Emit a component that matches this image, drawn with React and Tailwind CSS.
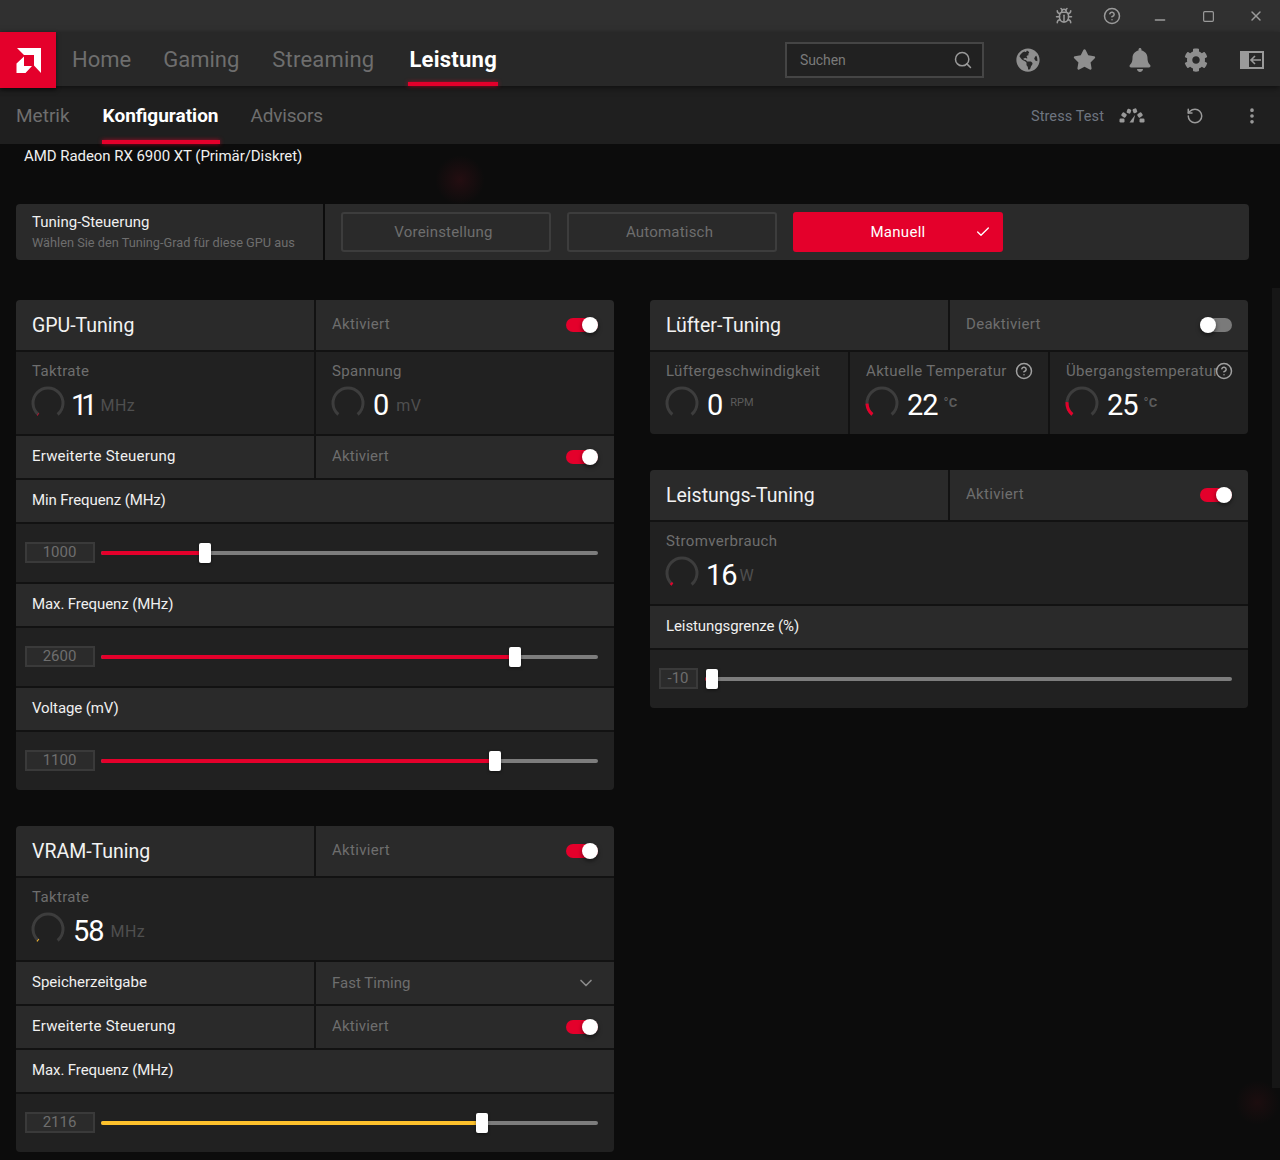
import React from "react";
import { Bug, CircleHelp, Minus, Square, X, Search, RotateCcw, EllipsisVertical, ChevronDown, Check } from "lucide-react";
import { FaGlobeAmericas, FaStar, FaBell, FaCog } from "react-icons/fa";

const RED = "#e4002b";

function Toggle({ on = true }) {
  return (
    <div className={`relative w-[32px] h-[14px] rounded-full ${on ? "bg-[#e4002b]" : "bg-[#7a7a7a]"}`}>
      <div className={`absolute top-[-1px] w-[16px] h-[16px] rounded-full bg-white shadow-[0_2px_4px_rgba(0,0,0,0.5)] ${on ? "right-0" : "left-0"}`} />
    </div>
  );
}

function Gauge({ pct = 0, color = RED }) {
  const d = "M7.36 28.5 A15 15 0 1 1 26.64 28.5";
  return (
    <svg width="34" height="34" viewBox="0 0 34 34" className="shrink-0 ml-[-1px]">
      <path d={d} fill="none" stroke="#3d3d3d" strokeWidth="3" />
      {pct > 0 && <path d={d} fill="none" stroke={color} strokeWidth="3" pathLength="100" strokeDasharray={`${pct} 100`} />}
    </svg>
  );
}

function Metric({ label, value, unit, pct, color, small, unitClass = "text-[13px] font-bold", help, className = "", gap = "ml-[7px]", valueClass = "tracking-[-1px] ml-[8px]" }) {
  return (
    <div className={`relative bg-[#212121] h-[82px] pl-[16px] pt-[9px] overflow-hidden ${className}`}>
      <div className="text-[15px] leading-[20px] text-[#6e6e6e] tracking-[0.35px] whitespace-nowrap">{label}</div>
      {help && <CircleHelp size={18} strokeWidth={2} className="absolute right-[15px] top-[10px] text-[#a0a0a0]" />}
      <div className="flex items-center mt-[5px] h-[34px]">
        <Gauge pct={pct} color={color} />
        <div className={`text-[29px] leading-[34px] text-white mt-[3px] ${valueClass}`}>{value}</div>
        {small ? (
          <div className={`self-start leading-[12px] text-[#5c5c5c] mt-[11px] ${unitClass} ${gap}`}>{unit}</div>
        ) : (
          <div className={`text-[16px] leading-[20px] text-[#4f4f4f] tracking-[0.4px] mt-[6px] ${gap}`}>{unit}</div>
        )}
      </div>
    </div>
  );
}

function HeadRow({ title, status, on = true }) {
  return (
    <div className="flex gap-[2px] h-[50px]">
      <div className="w-[298px] bg-[#2a2a2a] flex items-center pl-[16px] text-[19.5px] text-[#f2f2f2] pt-[1px]">{title}</div>
      <div className="w-[298px] bg-[#2a2a2a] flex items-center justify-between pl-[16px] pr-[16px] pb-[1px]">
        <span className="text-[15px] text-[#6e6e6e] tracking-[0.3px] pb-[1px]">{status}</span>
        <Toggle on={on} />
      </div>
    </div>
  );
}

function SplitRow({ title, children, titleClass = "" }) {
  return (
    <div className="flex gap-[2px] h-[42px]">
      <div className={`w-[298px] bg-[#2a2a2a] flex items-center pl-[16px] text-[15px] text-[#f0f0f0] pb-[1px] ${titleClass}`}>{title}</div>
      <div className="w-[298px] bg-[#2a2a2a] flex items-center justify-between pl-[16px] pr-[16px] text-[15px] text-[#6e6e6e] tracking-[0.2px]">{children}</div>
    </div>
  );
}

function LabelRow({ title }) {
  return <div className="h-[42px] bg-[#2a2a2a] flex items-center pl-[16px] text-[15px] text-[#f0f0f0] tracking-[-0.1px] pb-[1px]">{title}</div>;
}

function SliderRow({ value, pos, color = RED, width = 497, boxW = 70, left = 9, right = 16, gap = 6 }) {
  return (
    <div className="bg-[#212121] flex items-start h-[58px]" style={{ paddingLeft: left, paddingRight: right }}>
      <div
        className="mt-[18px] h-[21px] border-2 border-[#3a3a3a] bg-[#2b2b2b] flex items-center justify-center text-[15px] text-[#6e6e6e] shrink-0 pr-[1px]"
        style={{ width: boxW }}
      >
        {value}
      </div>
      <div className="relative h-[4px] mt-[27px] bg-[#7d7d7d] rounded-full" style={{ width, marginLeft: gap }}>
        <div className="absolute left-0 top-0 h-full rounded-full" style={{ width: pos, background: color }} />
        <div className="absolute top-[-8px] w-[12px] h-[20px] bg-white rounded-[2px] shadow-[0_1px_3px_rgba(0,0,0,0.5)]" style={{ left: pos - 6 }} />
      </div>
    </div>
  );
}

function Card({ children, className = "" }) {
  return <div className={`rounded-[4px] overflow-hidden flex flex-col gap-[2px] bg-[#121212] ${className}`}>{children}</div>;
}

function StressIcon() {
  return (
    <svg width="26" height="16" viewBox="0 0 26 16" fill="#9a9a9a">
      <rect x="0.5" y="10.5" width="5" height="4" rx="1.2" />
      <rect x="2.5" y="5" width="5" height="4" rx="1.2" transform="rotate(35 5 7)" />
      <rect x="7.5" y="1" width="4.5" height="4" rx="1.2" transform="rotate(-70 10 3)" />
      <rect x="13.5" y="1" width="4.5" height="4" rx="1.2" transform="rotate(70 16 3)" />
      <rect x="18.5" y="5" width="5" height="4" rx="1.2" transform="rotate(-35 21 7)" />
      <rect x="20.5" y="10.5" width="5" height="4" rx="1.2" />
      <path d="M10.5 14.5 L16 7 L14.5 14.5 Z" />
    </svg>
  );
}

function CollapseIcon() {
  return (
    <svg width="24" height="18" viewBox="0 0 24 18">
      <path fillRule="evenodd" fill="#9a9a9a" d="M0 0H24V18H0Z M9 2V16H22V2Z" />
      <path d="M21 9H11 M15 5L11 9L15 13" stroke="#9a9a9a" strokeWidth="1.6" fill="none" />
    </svg>
  );
}

export default function App() {
  return (
    <div className="relative w-[1280px] h-[1160px] overflow-hidden bg-[#0c0c0c] font-[Roboto,sans-serif]">
      {/* faint background glows */}
      <div className="absolute left-[435px] top-[155px] w-[50px] h-[50px] rounded-full bg-[radial-gradient(circle,rgba(120,20,35,0.22),transparent_70%)]" />
      <div className="absolute left-[1235px] top-[1080px] w-[45px] h-[45px] rounded-full bg-[radial-gradient(circle,rgba(110,20,30,0.16),transparent_70%)]" />
      <div className="absolute right-[0px] top-[288px] w-[8px] h-[800px] bg-[#161616]" />

      <div className="relative flex flex-col">
        {/* title bar */}
        <div className="h-[32px] bg-[#303030] flex justify-end items-center text-[#9a9a9a] pr-0">
          <div className="w-[48px] flex justify-center"><Bug size={18} strokeWidth={2} /></div>
          <div className="w-[48px] flex justify-center"><CircleHelp size={18} strokeWidth={2} /></div>
          <div className="w-[48px] flex justify-center pt-[8px]"><Minus size={16} strokeWidth={2} /></div>
          <div className="w-[48px] flex justify-center"><Square size={13} strokeWidth={2.2} /></div>
          <div className="w-[48px] flex justify-center"><X size={16} strokeWidth={2.2} /></div>
        </div>

        {/* main nav */}
        <div className="relative z-10 h-[54px] bg-[#282828] flex items-center shadow-[0_2px_6px_rgba(0,0,0,0.5)]">
          <div className="w-[56px] h-[56px] self-start bg-[#e4002b] flex items-center justify-center shadow-[0_2px_4px_rgba(0,0,0,0.5)]">
            <svg width="25" height="25" viewBox="0 0 25 25" fill="#fff">
              <path d="M1 0H25V25L18 17.5V7H8Z" />
              <path d="M8 8.5L0.5 15.5V25H9.5L16 18H8Z" />
            </svg>
          </div>
          <div className="flex gap-[32px] ml-[16px] h-full text-[22px]">
            {["Home", "Gaming", "Streaming"].map((n, i) => (
              <div key={n} className={`flex items-center h-full text-[#6e6e6e] pt-[1px] ${i === 2 ? "tracking-[0.2px] ml-[1px]" : ""}`}>{n}</div>
            ))}
            <div className="relative flex items-center h-full text-white font-bold pt-[1px] ml-[3px] tracking-[0.25px]">
              Leistung
              <div className="absolute left-[-1px] right-[-1px] bottom-0 h-[4px] bg-[#e4002b] shadow-[0_0_4px_rgba(228,0,43,0.7)]" />
            </div>
          </div>
          <div className="ml-auto flex items-center pt-[2px]">
            <div className="w-[199px] h-[36px] border-2 border-[#454545] bg-[#212121] flex items-center justify-between pl-[13px] pr-[9px] text-[14px] text-[#7a7a7a] mr-[16px]">
              <span className="tracking-[-0.1px]">Suchen</span>
              <Search size={20} strokeWidth={1.8} className="text-[#9a9a9a]" />
            </div>
            <div className="flex text-[#8f8f8f]">
              <div className="w-[56px] flex justify-center"><FaGlobeAmericas size={24} /></div>
              <div className="w-[56px] flex justify-center"><FaStar size={23} /></div>
              <div className="w-[56px] flex justify-center"><FaBell size={24} /></div>
              <div className="w-[56px] flex justify-center"><FaCog size={24} /></div>
              <div className="w-[56px] flex justify-center items-center"><CollapseIcon /></div>
            </div>
          </div>
        </div>

        {/* sub nav */}
        <div className="h-[58px] bg-[#1f1f1f] flex items-center">
          <div className="flex gap-[32px] ml-[16px] h-full text-[19px]">
            <div className="flex items-center h-full text-[#6e6e6e] pt-[2px]">Metrik</div>
            <div className="relative flex items-center h-full text-white font-bold pt-[2px] ml-[1px]">
              Konfiguration
              <div className="absolute left-[-1px] right-[-1px] bottom-0 h-[4px] bg-[#e4002b] shadow-[0_0_4px_rgba(228,0,43,0.7)]" />
            </div>
            <div className="flex items-center h-full text-[#6e6e6e] pt-[2px] tracking-[-0.2px]">Advisors</div>
          </div>
          <div className="ml-auto flex items-center text-[#9a9a9a] pt-[2px]">
            <span className="text-[14.5px] text-[#6e7580] tracking-[0.1px] pt-[1px]">Stress Test</span>
            <div className="ml-[15px]"><StressIcon /></div>
            <RotateCcw size={18} strokeWidth={2} className="ml-[41px]" />
            <div className="w-[56px] ml-[20px] flex justify-center"><EllipsisVertical size={20} strokeWidth={2.4} /></div>
          </div>
        </div>

        {/* content */}
        <div className="pl-[16px] pr-[31px]">
          <div className="pl-[8px] h-[60px] pt-[1px] text-[15px] leading-[22px] text-[#f0f0f0] tracking-[-0.05px]">AMD Radeon RX 6900 XT (Primär/Diskret)</div>

          <div className="flex h-[56px] rounded-[4px] overflow-hidden gap-[2px] w-[1233px]">
            <div className="w-[307px] bg-[#2a2a2a] pl-[16px] pt-[8px]">
              <div className="text-[15px] leading-[20px] text-[#f0f0f0]">Tuning-Steuerung</div>
              <div className="text-[12.75px] leading-[21px] text-[#6e6e6e]">Wählen Sie den Tuning-Grad für diese GPU aus</div>
            </div>
            <div className="flex-1 bg-[#2a2a2a] flex items-center gap-[16px] pl-[16px]">
              <div className="w-[210px] h-[40px] rounded-[3px] border-2 border-[#3d3d3d] flex items-center justify-center text-[15px] text-[#6e6e6e] tracking-[0.2px] pr-[5px]">Voreinstellung</div>
              <div className="w-[210px] h-[40px] rounded-[3px] border-2 border-[#3d3d3d] flex items-center justify-center text-[15px] text-[#6e6e6e] tracking-[0.2px] pr-[5px]">Automatisch</div>
              <div className="relative w-[210px] h-[40px] rounded-[3px] bg-[#e4002b] flex items-center justify-center text-[15px] text-white tracking-[0.3px]">
                Manuell
                <Check size={16} strokeWidth={2} className="absolute right-[12px] top-[12px]" />
              </div>
            </div>
          </div>

          <div className="flex gap-[36px] mt-[40px] items-start">
            {/* left column */}
            <div className="w-[598px] flex flex-col gap-[36px]">
              <Card>
                <HeadRow title="GPU-Tuning" status="Aktiviert" />
                <div className="flex gap-[2px]">
                  <Metric className="w-[298px]" label="Taktrate" value="11" unit="MHz" pct={1} valueClass="tracking-[-6px] pr-[2px] ml-[6px]" />
                  <Metric className="w-[298px]" label="Spannung" value="0" unit="mV" gap="ml-[8px]" />
                </div>
                <SplitRow title="Erweiterte Steuerung" titleClass="tracking-[0.2px]"><span className="pb-[1px]">Aktiviert</span><Toggle /></SplitRow>
                <LabelRow title="Min Frequenz (MHz)" />
                <SliderRow value="1000" pos={104} />
                <LabelRow title="Max. Frequenz (MHz)" />
                <SliderRow value="2600" pos={414} />
                <LabelRow title="Voltage (mV)" />
                <SliderRow value="1100" pos={394} />
              </Card>
              <Card>
                <HeadRow title="VRAM-Tuning" status="Aktiviert" />
                <Metric label="Taktrate" value="58" unit="MHz" pct={1.5} color="#f7b62b" />
                <SplitRow title="Speicherzeitgabe"><span className="tracking-normal">Fast Timing</span><ChevronDown size={20} strokeWidth={2} className="text-[#8a8a8a] mr-[2px]" /></SplitRow>
                <SplitRow title="Erweiterte Steuerung" titleClass="tracking-[0.2px]"><span className="pb-[1px]">Aktiviert</span><Toggle /></SplitRow>
                <LabelRow title="Max. Frequenz (MHz)" />
                <SliderRow value="2116" pos={381} color="#fdc12c" />
              </Card>
            </div>

            {/* right column */}
            <div className="w-[598px] flex flex-col gap-[36px]">
              <Card>
                <HeadRow title="Lüfter-Tuning" status="Deaktiviert" on={false} />
                <div className="flex gap-[2px]">
                  <Metric className="w-[198px]" label="Lüftergeschwindigkeit" value="0" unit="RPM" small unitClass="text-[11px]" gap="ml-[8px]" />
                  <Metric className="w-[198px]" label="Aktuelle Temperatur" value="22" unit="°C" small pct={17} help gap="ml-[6px]" />
                  <Metric className="w-[198px]" label="Übergangstemperatur" value="25" unit="°C" small pct={19} help gap="ml-[6px]" />
                </div>
              </Card>
              <Card>
                <HeadRow title="Leistungs-Tuning" status="Aktiviert" />
                <Metric label="Stromverbrauch" value="16" unit="W" pct={3} gap="ml-[3px]" valueClass="tracking-[-1px] ml-[7px]" />
                <LabelRow title="Leistungsgrenze (%)" />
                <SliderRow value="-10" pos={7} boxW={39} width={527} gap={7} />
              </Card>
            </div>
          </div>
        </div>
      </div>
    </div>
  );
}
